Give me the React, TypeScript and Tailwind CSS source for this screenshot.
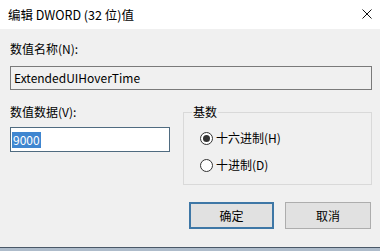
import { useState } from "react"

function Radio({ checked, label, onClick }: { checked: boolean; label: string; onClick: () => void }) {
  return (
    <div className="flex items-center h-[16px] cursor-default" onClick={onClick}>
      <span className="w-[13px] h-[13px] rounded-full border border-[#333333] bg-white flex items-center justify-center">
        {checked && <span className="w-[7px] h-[7px] rounded-full bg-[#333333]" />}
      </span>
      <span className="ml-[3px]">{label}</span>
    </div>
  )
}

function App() {
  const [base, setBase] = useState('hex')

  return (
    <div className="w-[380px] h-[251px] flex flex-col bg-[#f0f0f0] text-black text-[12px] leading-[16px] overflow-hidden" style={{ fontFamily: '"Noto Sans CJK SC", "Noto Sans", sans-serif' }}>

      <div className="h-[29px] bg-white flex items-center justify-between pl-[8px] pr-[8px] shrink-0">
        <p className="text-[12.5px]">编辑 DWORD (32 位)值</p>
        <svg width="10" height="10" viewBox="0 0 10 10" className="mb-[2px]">
          <path d="M0.5 0.5 L9.5 9.5 M9.5 0.5 L0.5 9.5" stroke="#111" strokeWidth="1" />
        </svg>
      </div>

      <div className="flex flex-col flex-1 pl-[10px] pr-[8px]">
        <p className="mt-[12px]">数值名称(N):</p>
        <div className="mt-[9px] h-[24px] border border-[#7a7a7a] flex items-center pl-[3px]">ExtendedUIHoverTime</div>

        <div className="flex items-start mt-[14px]">
          <div className="flex flex-col w-[160px]">
            <p>数值数据(V):</p>
            <div className="mt-[7px] h-[25px] border border-[#4f6b80] bg-white flex items-center pl-[1px]">
              <span className="bg-[#3f86d0] text-white px-[1px]">9000</span>
            </div>
          </div>

          <fieldset className="ml-[13px] flex-1 h-[81px] border border-[#d9d9d9] px-[8px] pt-[10px]">
            <legend className="px-[1px]">基数</legend>
            <div className="flex flex-col gap-[11px] pl-[8px]">
              <Radio checked={base === 'hex'} label="十六进制(H)" onClick={() => setBase('hex')} />
              <Radio checked={base === 'dec'} label="十进制(D)" onClick={() => setBase('dec')} />
            </div>
          </fieldset>
        </div>

        <div className="flex justify-end gap-[11px] mt-[17px] pr-[1px]">
          <button className="w-[85px] h-[27px] bg-[#e1e1e1] border-2 border-[#3e77a6] cursor-pointer">确定</button>
          <button className="w-[86px] h-[27px] bg-[#e1e1e1] border border-[#adadad] cursor-pointer">取消</button>
        </div>
      </div>

      <div className="h-[1px] bg-[#4a5868] shrink-0" />
      <div className="h-[3px] bg-[#aebccb] shrink-0" />
    </div>
  )
}

export default App
